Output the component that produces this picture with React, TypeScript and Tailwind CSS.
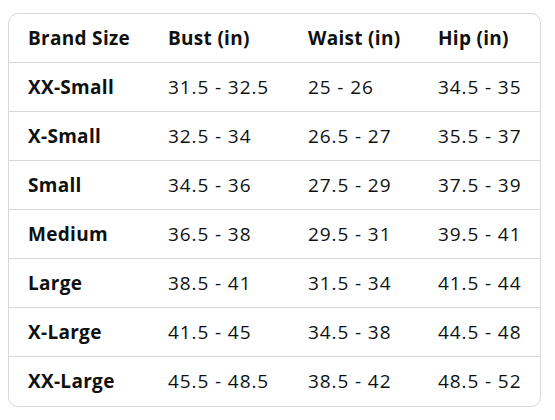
const headers = ['Brand Size', 'Bust (in)', 'Waist (in)', 'Hip (in)']

const rows = [
  ['XX-Small', '31.5 - 32.5', '25 - 26', '34.5 - 35'],
  ['X-Small', '32.5 - 34', '26.5 - 27', '35.5 - 37'],
  ['Small', '34.5 - 36', '27.5 - 29', '37.5 - 39'],
  ['Medium', '36.5 - 38', '29.5 - 31', '39.5 - 41'],
  ['Large', '38.5 - 41', '31.5 - 34', '41.5 - 44'],
  ['X-Large', '41.5 - 45', '34.5 - 38', '44.5 - 48'],
  ['XX-Large', '45.5 - 48.5', '38.5 - 42', '48.5 - 52'],
]

const cols = 'grid grid-cols-[140px_140px_130px_1fr] h-[49px] items-center'

export default function App() {
  return (
    <div className="w-[555px] h-[420px] bg-white pt-[13px] pl-[8px] font-['Open_Sans',sans-serif] text-[#0f1111]">
      <div className="w-[533px] border border-[#d5d9d9] rounded-[10px] overflow-hidden">
        <div className={`${cols} border-b border-[#d5d9d9] font-bold text-[19px] tracking-[0.3px]`}>
          {headers.map((h) => (
            <div key={h} className="pl-[19px]">
              {h}
            </div>
          ))}
        </div>
        {rows.map((r, i) => (
          <div
            key={r[0]}
            className={`${cols} text-[19px] ${i < rows.length - 1 ? 'border-b border-[#d5d9d9]' : ''}`}
          >
            {r.map((c, j) => (
              <div
                key={j}
                className={`pl-[19px] ${j === 0 ? 'font-bold tracking-[0.3px]' : 'tracking-[0.9px]'}`}
              >
                {c}
              </div>
            ))}
          </div>
        ))}
      </div>
    </div>
  )
}
